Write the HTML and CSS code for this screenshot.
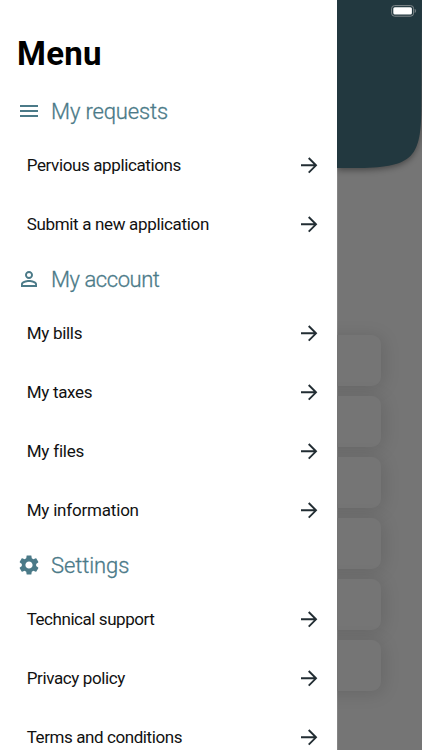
FILE: index.html
```
<!DOCTYPE html>
<html lang="en">
<head>
<meta charset="utf-8">
<title>Menu</title>
<link rel="stylesheet" href="styles.css">
</head>
<body>
<svg class="defs" width="0" height="0" aria-hidden="true">
  <symbol id="arrow" viewBox="0 0 18 18"><path d="M1 9.300H16M8.700 2L16 9.300L8.700 16.600" fill="none" stroke="currentColor" stroke-width="1.900"/></symbol>
</svg>
<div class="screen">
  <nav class="drawer">
    <h1 class="title">Menu</h1>

    <h2 class="section">
      <svg class="icon" viewBox="0 0 24 24"><path d="M3 18h18v-2H3v2zm0-5h18v-2H3v2zm0-7v2h18V6H3z"/></svg>
      <span class="t-requests">My requests</span>
    </h2>
    <ul class="list">
      <li class="item"><span class="t-previous">Pervious applications</span><svg class="arrow"><use href="#arrow"/></svg></li>
      <li class="item"><span class="t-submit">Submit a new application</span><svg class="arrow"><use href="#arrow"/></svg></li>
    </ul>

    <h2 class="section">
      <svg class="icon" viewBox="0 0 24 24"><path d="M12 5.900a2.100 2.100 0 1 1 0 4.200 2.100 2.100 0 0 1 0-4.200m0 9c2.970 0 6.100 1.460 6.100 2.100v1.100H5.900V17c0-.64 3.130-2.100 6.100-2.100M12 4C9.790 4 8 5.790 8 8s1.790 4 4 4 4-1.790 4-4-1.790-4-4-4zm0 9c-2.670 0-8 1.340-8 4v3h16v-3c0-2.660-5.330-4-8-4z"/></svg>
      <span class="t-account">My account</span>
    </h2>
    <ul class="list">
      <li class="item"><span class="t-bills">My bills</span><svg class="arrow"><use href="#arrow"/></svg></li>
      <li class="item"><span class="t-taxes">My taxes</span><svg class="arrow"><use href="#arrow"/></svg></li>
      <li class="item"><span class="t-files">My files</span><svg class="arrow"><use href="#arrow"/></svg></li>
      <li class="item"><span class="t-info">My information</span><svg class="arrow"><use href="#arrow"/></svg></li>
    </ul>

    <h2 class="section">
      <svg class="icon" viewBox="0 0 24 24"><path d="M19.140 12.940c.04-.3.06-.61.06-.94 0-.32-.02-.64-.07-.94l2.030-1.580c.18-.14.23-.41.12-.61l-1.920-3.320c-.12-.22-.37-.29-.59-.22l-2.390.96c-.5-.38-1.030-.7-1.620-.94l-.36-2.540c-.04-.24-.24-.41-.48-.41h-3.840c-.24 0-.43.17-.47.41l-.36 2.540c-.59.24-1.130.57-1.620.94l-2.390-.96c-.22-.08-.47 0-.59.22L2.740 8.870c-.12.21-.08.47.12.61l2.030 1.580c-.05.3-.09.63-.09.94s.02.64.07.94l-2.030 1.580c-.18.14-.23.41-.12.61l1.920 3.320c.12.22.37.29.59.22l2.390-.96c.5.38 1.030.7 1.620.94l.36 2.540c.05.24.24.41.48.41h3.840c.24 0 .44-.17.47-.41l.36-2.540c.59-.24 1.130-.56 1.620-.94l2.390.96c.22.08.47 0 .59-.22l1.920-3.320c.12-.22.07-.47-.12-.61l-2.010-1.580zM12 15.600c-1.980 0-3.600-1.620-3.600-3.600s1.620-3.600 3.600-3.600 3.600 1.620 3.600 3.600-1.620 3.600-3.600 3.600z"/></svg>
      <span class="t-settings">Settings</span>
    </h2>
    <ul class="list">
      <li class="item"><span class="t-support">Technical support</span><svg class="arrow"><use href="#arrow"/></svg></li>
      <li class="item"><span class="t-privacy">Privacy policy</span><svg class="arrow"><use href="#arrow"/></svg></li>
      <li class="item"><span class="t-terms">Terms and conditions</span><svg class="arrow"><use href="#arrow"/></svg></li>
    </ul>
  </nav>

  <div class="page">
    <header class="hero">
      <svg class="hero-shape" viewBox="0 0 85 168"><path d="M0 0H85L84.500 105C84 157 77 167 22 168H0Z"/></svg>
      <svg class="battery" viewBox="0 0 26 12"><rect x=".6" y=".6" width="22" height="10.600" rx="3" fill="none" stroke="#81898c"/><rect x="2.300" y="2.300" width="18.600" height="7.200" rx="1.500" fill="#fff"/><path d="M24 4.200q1.500 1.700 0 3.400z" fill="#81898c" stroke="#81898c" stroke-width=".5"/></svg>
    </header>
    <div class="cards">
      <div class="card"></div>
      <div class="card"></div>
      <div class="card"></div>
      <div class="card"></div>
      <div class="card"></div>
      <div class="card"></div>
    </div>
  </div>
</div>
</body>
</html>
```
FILE: styles.css
```
* { box-sizing: border-box; margin: 0; padding: 0; }
html, body { height: 750px; overflow: hidden; }
body { font-family: Roboto, "Liberation Sans", sans-serif; background: #757575; }
.defs { position: absolute; }
.screen { display: flex; width: 422px; height: 750px; overflow: hidden; }

.drawer { flex: none; width: 337px; height: 750px; overflow: hidden; background: #fff; }
.title { height: 85.5px; padding: 34px 0 0 17px; font-size: 33px; line-height: 40px; font-weight: 700; color: #000; letter-spacing: 0.3px; }
.section { display: flex; align-items: center; gap: 10px; height: 50px; padding-left: 17px; font-size: 22px; font-weight: 300; color: #4b7a88; white-space: nowrap; -webkit-text-stroke: 0.3px #4b7a88; }
.section span { padding-top: 2px; }
.icon { flex: none; width: 24px; height: 24px; fill: #4b7a88; }
.list { list-style: none; }
.item { display: flex; align-items: center; justify-content: space-between; height: 59px; padding: 0 19px 0 26.700px; font-size: 17px; color: #111; white-space: nowrap; }
.arrow { flex: none; width: 18px; height: 18px; color: #222d33; }

.t-requests { letter-spacing: -0.15px; }
.t-account { letter-spacing: -0.45px; }
.t-settings { letter-spacing: -0.1px; }
.t-previous { letter-spacing: -0.38px; }
.t-submit { letter-spacing: -0.33px; }
.t-bills { letter-spacing: -0.3px; }
.t-taxes { letter-spacing: -0.3px; }
.t-files { letter-spacing: -0.2px; }
.t-info { letter-spacing: -0.2px; }
.t-support { letter-spacing: -0.45px; }
.t-privacy { letter-spacing: -0.38px; }
.t-terms { letter-spacing: -0.42px; }

.page { flex: 1; min-width: 0; overflow: hidden; background: #757575; box-shadow: inset 1px 0 #848484; }
.hero { position: relative; height: 168px; }
.hero-shape { display: block; width: 85px; height: 168px; overflow: visible; fill: #22383f; filter: drop-shadow(0 2px 3px rgba(0, 0, 0, .4)); }
.battery { position: absolute; top: 5px; right: 5px; width: 26px; height: 12px; }
.cards { display: flex; flex-direction: column; gap: 10px; margin: 167px 41px 0 -30px; }
.card { height: 51px; border-radius: 9px; background: #757575; box-shadow: 2px 2px 18px rgba(0, 0, 0, .13); }
```
